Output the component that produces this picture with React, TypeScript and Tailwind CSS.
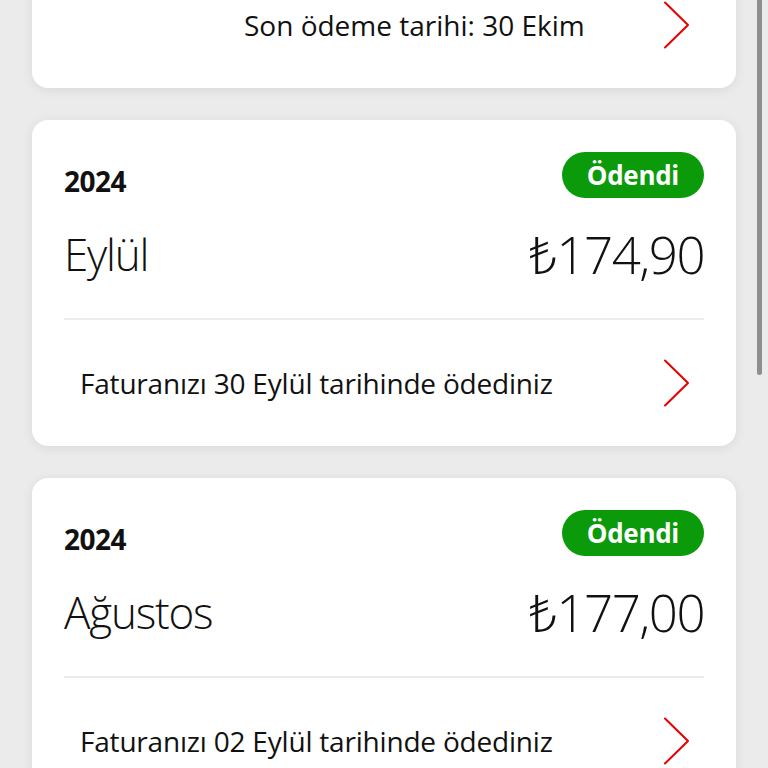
import React from "react";

const Chevron = () => (
  <svg width="27" height="48" viewBox="0 0 27 48" fill="none" className="shrink-0">
    <path d="M2 1.5 L25 24 L2 46.5" stroke="#e60000" strokeWidth="2" strokeLinecap="round" strokeLinejoin="round" />
  </svg>
);

const font = { fontFamily: '"Open Sans", "Noto Sans", sans-serif' };

type Bill = { year: string; month: string; amount: string; note: string };

const bills: Bill[] = [
  { year: "2024", month: "Eylül", amount: "174,90", note: "Faturanızı 30 Eylül tarihinde ödediniz" },
  { year: "2024", month: "Ağustos", amount: "177,00", note: "Faturanızı 02 Eylül tarihinde ödediniz" },
];

function BillCard({ b }: { b: Bill }) {
  return (
    <div className="bg-white rounded-[16px] shadow-[0_2px_12px_rgba(0,0,0,0.08)] px-[32px] pt-[32px]">
      <div className="flex items-end justify-between h-[46px]">
        <span className="text-[28px] font-bold text-[#111] leading-none pb-[3px] tracking-[-0.5px]">{b.year}</span>
        <span className="h-[46px] px-[25px] rounded-full bg-[#0a9a0a] text-white text-[26px] font-bold flex items-center leading-none tracking-[-0.3px]">
          Ödendi
        </span>
      </div>
      <div className="flex items-center justify-between mt-[26px] h-[60px]">
        <span className="text-[44px] font-light text-[#111] leading-none tracking-[-1.2px]">{b.month}</span>
        <span className="text-[51px] font-light text-[#111] leading-none tracking-[-1.5px]">₺{b.amount}</span>
      </div>
      <div className="mt-[34px] h-[2px] bg-[#ececec]" />
      <div className="flex items-center justify-between h-[126px] pl-[16px] pr-[14px]">
        <span className="text-[28px] text-[#111] tracking-[-0.2px]">{b.note}</span>
        <Chevron />
      </div>
    </div>
  );
}

export default function App() {
  return (
    <div className="relative w-[768px] h-[768px] overflow-hidden bg-[#ebebeb]" style={font}>
      <div className="flex flex-col gap-[32px] pl-[32px] pr-[32px] mt-[-38px]">
        <div className="bg-white rounded-[16px] shadow-[0_2px_12px_rgba(0,0,0,0.08)]">
          <div className="flex items-center justify-between h-[126px] pl-[212px] pr-[46px]">
            <span className="text-[28px] text-[#111]">Son ödeme tarihi: 30 Ekim</span>
            <Chevron />
          </div>
        </div>
        {bills.map((b) => (
          <BillCard key={b.month} b={b} />
        ))}
      </div>
      <div className="absolute top-0 right-[6px] w-[5px] h-[375px] rounded-b-full bg-[#8e8e8e]" />
    </div>
  );
}
